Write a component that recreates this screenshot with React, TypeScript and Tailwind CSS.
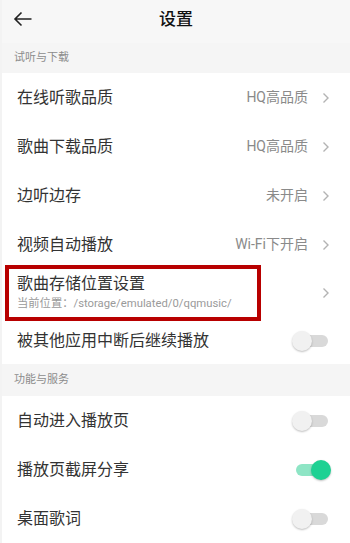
import React from "react";

const font = { fontFamily: 'Roboto, "Noto Sans CJK SC", "Noto Sans", sans-serif' };

function Chevron() {
  return (
    <svg width="8" height="12" viewBox="0 0 8 12" className="ml-[14px] shrink-0">
      <path d="M1.5 1.5 L6 6 L1.5 10.5" fill="none" stroke="#b3b3b3" strokeWidth="1.4" />
    </svg>
  );
}

function Toggle({ on }: { on?: boolean }) {
  return (
    <div className="relative h-[20px] w-[38px] shrink-0">
      <div
        className={
          "absolute left-[4px] top-[4px] h-[12px] w-[32px] rounded-full " +
          (on ? "bg-[#8ee5c5]" : "bg-[#d9d9d9]")
        }
      />
      <div
        className={
          "absolute top-0 h-[20px] w-[20px] rounded-full shadow-[0_1px_2px_rgba(0,0,0,0.25)] " +
          (on ? "left-[19px] bg-[#1ed193]" : "left-0 bg-[#f1f1f1]")
        }
      />
    </div>
  );
}

function Row({ title, value, toggle, on }: { title: string; value?: string; toggle?: boolean; on?: boolean }) {
  return (
    <div className="flex h-[49px] items-center justify-between bg-white pl-[15px] pr-[20px]">
      <span className="text-[16px] text-[#333]">{title}</span>
      {toggle ? (
        <Toggle on={on} />
      ) : (
        <div className="flex items-center">
          <span className="text-[14px] text-[#8a8a8a]">{value}</span>
          <Chevron />
        </div>
      )}
    </div>
  );
}

function Section({ title, tall }: { title: string; tall?: boolean }) {
  return (
    <div
      className={
        "flex items-center bg-[#f5f5f5] pl-[12px] text-[11px] text-[#8c8c8c] " + (tall ? "h-[32px]" : "h-[30px]")
      }
    >
      {title}
    </div>
  );
}

export default function App() {
  return (
    <div className="h-[543px] w-[350px] overflow-hidden border-l-2 border-[#f3f3f3] bg-[#f6f6f6]" style={font}>
      <div className="relative flex h-[43px] items-center justify-center bg-[#f7f7f7] pb-[3px]">
        <svg width="20" height="16" viewBox="0 0 20 16" className="absolute left-[11px] top-[11px]">
          <path d="M18.5 8 H2 M8.5 1.5 L2 8 L8.5 14.5" fill="none" stroke="#222" strokeWidth="1.6" />
        </svg>
        <span className="text-[17px] font-medium text-[#111]">设置</span>
      </div>
      <Section title="试听与下载" />
      <Row title="在线听歌品质" value="HQ高品质" />
      <Row title="歌曲下载品质" value="HQ高品质" />
      <Row title="边听边存" value="未开启" />
      <Row title="视频自动播放" value="Wi-Fi下开启" />
      <div className="relative flex h-[48px] items-center justify-between bg-white pl-[15px] pr-[20px]">
        <div className="flex flex-col">
          <span className="text-[16px] leading-[22px] text-[#333]">歌曲存储位置设置</span>
          <span className="text-[11.3px] leading-[18px] text-[#9a9a9a]">当前位置：/storage/emulated/0/qqmusic/</span>
        </div>
        <Chevron />
        <div className="absolute left-[3px] top-[-4px] h-[56px] w-[256px] border-[4px] border-[#b80000]" />
      </div>
      <div className="flex h-[47px] items-center justify-between bg-white pl-[15px] pr-[20px]">
        <span className="text-[16px] text-[#333]">被其他应用中断后继续播放</span>
        <Toggle />
      </div>
      <Section title="功能与服务" tall />
      <Row title="自动进入播放页" toggle />
      <Row title="播放页截屏分享" toggle on />
      <Row title="桌面歌词" toggle />
    </div>
  );
}
